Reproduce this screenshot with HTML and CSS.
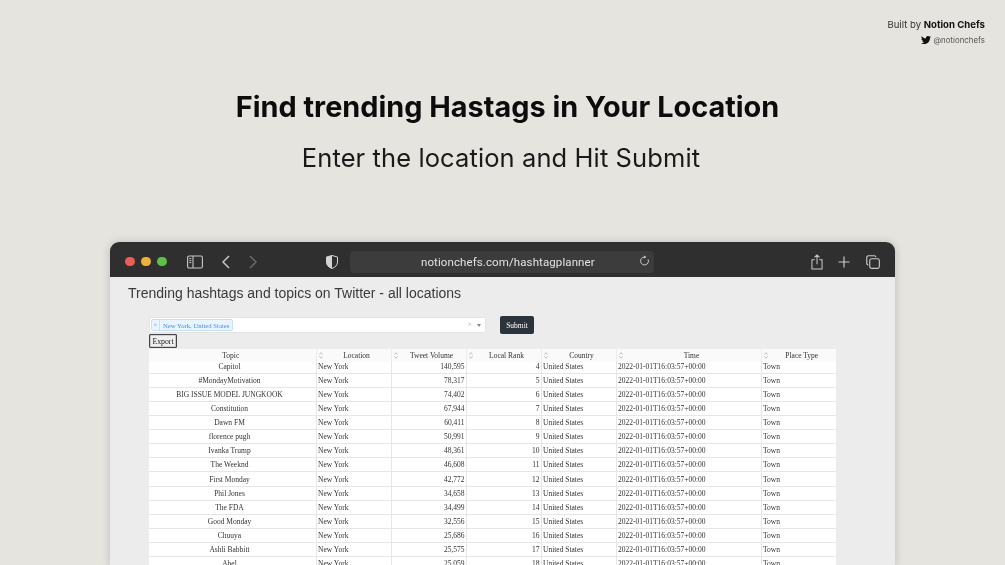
FILE: index.html
```html
<!DOCTYPE html>
<html lang="en">
<head>
<meta charset="utf-8">
<title>Find trending Hastags in Your Location</title>
<link rel="stylesheet" href="styles.css">
</head>
<body>
<svg class="defs" aria-hidden="true"><symbol id="sort" viewBox="0 0 4 7"><path d="M.4 2.6 2 .7l1.6 1.9M.4 4.4 2 6.3l1.6-1.9" fill="none" stroke="#a8a8a8" stroke-width=".7"/></symbol></svg>
<header class="credit">
  <p class="credit-line">Built by <strong>Notion Chefs</strong></p>
  <p class="credit-handle">
    <svg class="bird" viewBox="0 0 24 24" aria-hidden="true"><path d="M23.95 4.57a10 10 0 0 1-2.82.77 4.96 4.96 0 0 0 2.16-2.72c-.95.55-2 .95-3.12 1.18a4.92 4.92 0 0 0-8.38 4.48C7.69 8.09 4.07 6.13 1.64 3.16a4.82 4.82 0 0 0-.67 2.48c0 1.71.87 3.21 2.19 4.1a4.9 4.9 0 0 1-2.23-.62v.06a4.92 4.92 0 0 0 3.95 4.83 5 5 0 0 1-2.21.08 4.94 4.94 0 0 0 4.6 3.42A9.87 9.87 0 0 1 0 19.54a14 14 0 0 0 7.56 2.21c9.05 0 14-7.5 14-13.98 0-.21 0-.42-.02-.63a9.94 9.94 0 0 0 2.41-2.57z"/></svg>
    <span>@notionchefs</span>
  </p>
</header>

<section class="hero">
  <h1 class="title">Find trending Hastags in Your Location</h1>
  <p class="subtitle">Enter the location and Hit Submit</p>
</section>

<section class="browser">
  <div class="toolbar">
    <div class="lights">
      <span class="light light-red"></span>
      <span class="light light-yellow"></span>
      <span class="light light-green"></span>
    </div>
    <svg class="tool sidebar-icon" viewBox="0 0 16 14" aria-hidden="true"><rect x="0.6" y="1" width="14.8" height="12" rx="1.6" fill="none" stroke="currentColor" stroke-width="1.1"/><path d="M6 1v12" stroke="currentColor" stroke-width="1.1"/><path d="M2.3 3.6h2M2.3 5.6h2M2.3 7.6h2" stroke="currentColor" stroke-width="1"/></svg>
    <svg class="tool back" viewBox="0 0 8 14" aria-hidden="true"><path d="M7 1 1 7l6 6" fill="none" stroke="currentColor" stroke-width="1.5"/></svg>
    <svg class="tool forward" viewBox="0 0 8 14" aria-hidden="true"><path d="m1 1 6 6-6 6" fill="none" stroke="currentColor" stroke-width="1.5"/></svg>
    <svg class="tool shield" viewBox="0 0 12 14" aria-hidden="true"><path d="M6 .5 11.5 2v5c0 3.2-2.3 5.4-5.5 6.5C2.8 12.4.5 10.2.5 7V2z" fill="none" stroke="currentColor" stroke-width="1"/><path d="M6 .5 .5 2v5c0 3.2 2.3 5.4 5.5 6.5z" fill="currentColor"/></svg>
    <div class="address">
      <span class="url">notionchefs.com/hashtagplanner</span>
      <svg class="reload" viewBox="0 0 12 12" aria-hidden="true"><path d="M9.9 4.2A4.3 4.3 0 1 1 6 1.7" fill="none" stroke="currentColor" stroke-width="1"/><path d="M5.6 0 8 1.7 5.6 3.4z" fill="currentColor"/></svg>
    </div>
    <div class="tool-group">
      <svg class="tool share" viewBox="0 0 13 17" aria-hidden="true"><path d="M4 6H1v10h11V6H9M6.5 11V1M3.8 3.4 6.5.8l2.7 2.6" fill="none" stroke="currentColor" stroke-width="1.1"/></svg>
      <svg class="tool plus" viewBox="0 0 12 12" aria-hidden="true"><path d="M6 .5v11M.5 6h11" stroke="currentColor" stroke-width="1.2"/></svg>
      <svg class="tool tabs" viewBox="0 0 15 15" aria-hidden="true"><rect x="4" y="4" width="10.3" height="10.3" rx="2" fill="none" stroke="currentColor" stroke-width="1.2"/><path d="M2.4 10.6A1.7 1.7 0 0 1 .8 9V2.6A1.8 1.8 0 0 1 2.6.8H9a1.7 1.7 0 0 1 1.6 1.6" fill="none" stroke="currentColor" stroke-width="1.2"/></svg>
    </div>
  </div>

  <div class="page">
    <h2 class="page-title">Trending hashtags and topics on Twitter - all locations</h2>
    <div class="content">
      <div class="form-row">
        <div class="select">
          <span class="tag"><span class="tag-x">×</span><span class="tag-label">New York, United States</span></span>
          <span class="select-clear">×</span>
          <span class="select-caret"></span>
        </div>
        <button class="submit" type="button">Submit</button>
      </div>
      <button class="export" type="button">Export</button>
      <table class="trends">
        <colgroup>
          <col class="c-topic"><col class="c-std"><col class="c-std"><col class="c-std"><col class="c-std"><col class="c-time"><col class="c-std">
        </colgroup>
        <thead>
          <tr>
            <th>Topic</th>
            <th><svg class="sort"><use href="#sort"/></svg>Location</th>
            <th><svg class="sort"><use href="#sort"/></svg>Tweet Volume</th>
            <th><svg class="sort"><use href="#sort"/></svg>Local Rank</th>
            <th><svg class="sort"><use href="#sort"/></svg>Country</th>
            <th><svg class="sort"><use href="#sort"/></svg>Time</th>
            <th><svg class="sort"><use href="#sort"/></svg>Place Type</th>
          </tr>
        </thead>
        <tbody>
          <tr class="first"><td class="center">Capitol</td><td>New York</td><td class="num">140,595</td><td class="num">4</td><td>United States</td><td>2022-01-01T16:03:57+00:00</td><td>Town</td></tr>
          <tr><td class="center">#MondayMotivation</td><td>New York</td><td class="num">78,317</td><td class="num">5</td><td>United States</td><td>2022-01-01T16:03:57+00:00</td><td>Town</td></tr>
          <tr><td class="center">BIG ISSUE MODEL JUNGKOOK</td><td>New York</td><td class="num">74,402</td><td class="num">6</td><td>United States</td><td>2022-01-01T16:03:57+00:00</td><td>Town</td></tr>
          <tr><td class="center">Constitution</td><td>New York</td><td class="num">67,944</td><td class="num">7</td><td>United States</td><td>2022-01-01T16:03:57+00:00</td><td>Town</td></tr>
          <tr><td class="center">Dawn FM</td><td>New York</td><td class="num">60,411</td><td class="num">8</td><td>United States</td><td>2022-01-01T16:03:57+00:00</td><td>Town</td></tr>
          <tr><td class="center">florence pugh</td><td>New York</td><td class="num">50,991</td><td class="num">9</td><td>United States</td><td>2022-01-01T16:03:57+00:00</td><td>Town</td></tr>
          <tr><td class="center">Ivanka Trump</td><td>New York</td><td class="num">48,361</td><td class="num">10</td><td>United States</td><td>2022-01-01T16:03:57+00:00</td><td>Town</td></tr>
          <tr><td class="center">The Weeknd</td><td>New York</td><td class="num">46,608</td><td class="num">11</td><td>United States</td><td>2022-01-01T16:03:57+00:00</td><td>Town</td></tr>
          <tr><td class="center">First Monday</td><td>New York</td><td class="num">42,772</td><td class="num">12</td><td>United States</td><td>2022-01-01T16:03:57+00:00</td><td>Town</td></tr>
          <tr><td class="center">Phil Jones</td><td>New York</td><td class="num">34,658</td><td class="num">13</td><td>United States</td><td>2022-01-01T16:03:57+00:00</td><td>Town</td></tr>
          <tr><td class="center">The FDA</td><td>New York</td><td class="num">34,499</td><td class="num">14</td><td>United States</td><td>2022-01-01T16:03:57+00:00</td><td>Town</td></tr>
          <tr><td class="center">Good Monday</td><td>New York</td><td class="num">32,556</td><td class="num">15</td><td>United States</td><td>2022-01-01T16:03:57+00:00</td><td>Town</td></tr>
          <tr><td class="center">Chuuya</td><td>New York</td><td class="num">25,686</td><td class="num">16</td><td>United States</td><td>2022-01-01T16:03:57+00:00</td><td>Town</td></tr>
          <tr><td class="center">Ashli Babbitt</td><td>New York</td><td class="num">25,575</td><td class="num">17</td><td>United States</td><td>2022-01-01T16:03:57+00:00</td><td>Town</td></tr>
          <tr><td class="center">Abel</td><td>New York</td><td class="num">25,059</td><td class="num">18</td><td>United States</td><td>2022-01-01T16:03:57+00:00</td><td>Town</td></tr>
        </tbody>
      </table>
    </div>
  </div>
</section>
</body>
</html>
```
FILE: styles.css
```css
* { box-sizing: border-box; }
html, body { margin: 0; height: 565px; overflow: hidden; }
body {
  background: #e6e4df;
  font-family: Inter, "Liberation Sans", sans-serif;
  color: #111;
  display: flex;
  flex-direction: column;
}
p, h1, h2 { margin: 0; }
.defs { display: none; }

.credit {
  padding: 18px 20px 0 0;
  text-align: right;
  height: 46px;
  filter: blur(0.3px);
}
.credit-line { font-size: 9.6px; line-height: 13px; color: #333; }
.credit-line strong { font-weight: 700; color: #111; }
.credit-handle {
  display: flex; justify-content: flex-end; align-items: center; gap: 2px;
  margin-top: 3px; font-size: 7.9px; line-height: 12px; color: #555;
}
.bird { width: 10px; height: 10px; fill: #111; }

.hero { height: 196px; padding-top: 44px; text-align: center; filter: blur(0.2px); }
.title { font-size: 28.85px; line-height: 34px; font-weight: 700; color: #0c0c0c; padding-left: 10px; }
.subtitle { margin-top: 17px; font-size: 25.5px; line-height: 34px; font-weight: 400; letter-spacing: 0.1px; color: #1a1a1a; padding-right: 3px; }

.browser {
  width: 785px;
  margin-left: 110px;
  height: 323px;
  flex: none;
  border-radius: 9px 9px 0 0;
  overflow: hidden;
  background: #ececec;
  box-shadow: 0 0 8px rgba(0, 0, 0, 0.18);
}
.toolbar {
  height: 35px;
  padding-top: 4px;
  background: #2f2f2f;
  display: flex;
  align-items: center;
  color: #c9c9c9;
  filter: blur(0.3px);
}
.lights { display: flex; gap: 6.5px; margin-left: 15px; }
.light { width: 9.5px; height: 9.5px; border-radius: 50%; }
.light-red { background: #ee5c54; }
.light-yellow { background: #f0b136; }
.light-green { background: #5cc242; }
.tool { display: block; flex: none; }
.sidebar-icon { width: 16px; height: 14px; margin-left: 20.5px; }
.back { width: 8px; height: 14px; margin-left: 19px; color: #c9c9c9; }
.forward { width: 8px; height: 14px; margin-left: 19px; color: #6a6a6a; }
.shield { width: 12px; height: 14px; margin-left: 69px; color: #d4d4d4; }
.address {
  width: 304px; height: 22px; margin-left: 12px;
  background: #3c3c3c; border-radius: 4px;
  display: flex; align-items: center; justify-content: space-between;
  padding: 1px 4px 0 71px;
}
.url { font-family: Roboto, sans-serif; font-size: 11.5px; letter-spacing: 0.1px; color: #e2e2e2; white-space: nowrap; }
.reload { width: 11px; height: 12px; margin-top: -2px; color: #d4d4d4; }
.tool-group { display: flex; align-items: center; margin-left: 157px; }
.share { width: 12px; height: 16px; }
.plus { width: 12px; height: 12px; margin-left: 15px; }
.tabs { width: 14px; height: 14px; margin-left: 16px; }

.page { filter: blur(0.35px); }
.page-title {
  font-family: "Liberation Sans", Arial, sans-serif;
  font-weight: 400; font-size: 14px; line-height: 17px;
  color: #3a3a3a;
  padding: 8px 0 0 18px;
}
.content { padding: 15px 0 0 39px; font-family: "Liberation Serif", "Times New Roman", serif; }
.form-row { display: flex; align-items: flex-start; }
.select {
  width: 337px; height: 16px;
  background: #fff; border: 1px solid #e3e3e3; border-radius: 2px;
  display: flex; align-items: center; padding-left: 1px;
}
.tag {
  display: flex; align-items: center; height: 12px;
  background: #ebf5ff; border: 1px solid #c5e0ff; border-radius: 2px;
  font-size: 6.7px; color: #3a8cff;
}
.tag-x { width: 8px; text-align: center; border-right: 1px solid #c5e0ff; line-height: 10px; }
.tag-label { padding: 0 3px; white-space: nowrap; }
.select-clear { margin-left: auto; font-size: 8px; color: #b5b5b5; line-height: 10px; }
.select-caret {
  margin: 0 4px 0 5px; width: 0; height: 0;
  border: 2.5px solid transparent; border-top: 3px solid #888; border-bottom: 0;
}
.submit {
  margin-left: 14px; width: 34px; height: 18px; margin-top: -1px; padding: 0;
  background: #2b333b; color: #fff; border: 0; border-radius: 2px;
  font-family: inherit; font-size: 7.5px; font-weight: 400;
}
.export {
  display: block; margin-top: 0; width: 28px; height: 14px; padding: 0;
  background: #efefef; color: #222; border: 1px solid #444; border-radius: 1px;
  box-shadow: inset 0 0 0 0.3px #777;
  font-family: inherit; font-size: 7.8px;
}
.trends {
  margin-top: 1px;
  table-layout: fixed;
  width: 687px;
  border-collapse: collapse;
  font-size: 7.5px;
  color: #333;
  background: #fff;
}
.trends thead tr { background: #fafafa; }
.c-topic { width: 167px; }
.c-std { width: 75px; }
.c-time { width: 145px; }
.trends th {
  height: 13px; padding: 0 6px 0 12px; font-weight: 400;
  line-height: 12px; text-align: center; position: relative; white-space: nowrap;
  border-left: 1px solid #ececec;
}
.trends th:first-child { border-left: 0; padding: 0 3px 0 0; }
.sort { position: absolute; left: 2px; top: 3px; width: 4px; height: 7px; }
.trends td {
  height: 14.15px; padding: 1px 1px 0 1.5px; line-height: 12px; white-space: nowrap;
  border-bottom: 1px solid #e6e6e6; border-left: 1px solid #e6e6e6; vertical-align: middle;
}
.trends td:first-child { border-left: 0; }
.trends .first td { height: 11px; padding-top: 0; line-height: 10px; vertical-align: top; }
.trends td.center { text-align: center; padding-right: 7px; }
.trends td.num { text-align: right; }
```
